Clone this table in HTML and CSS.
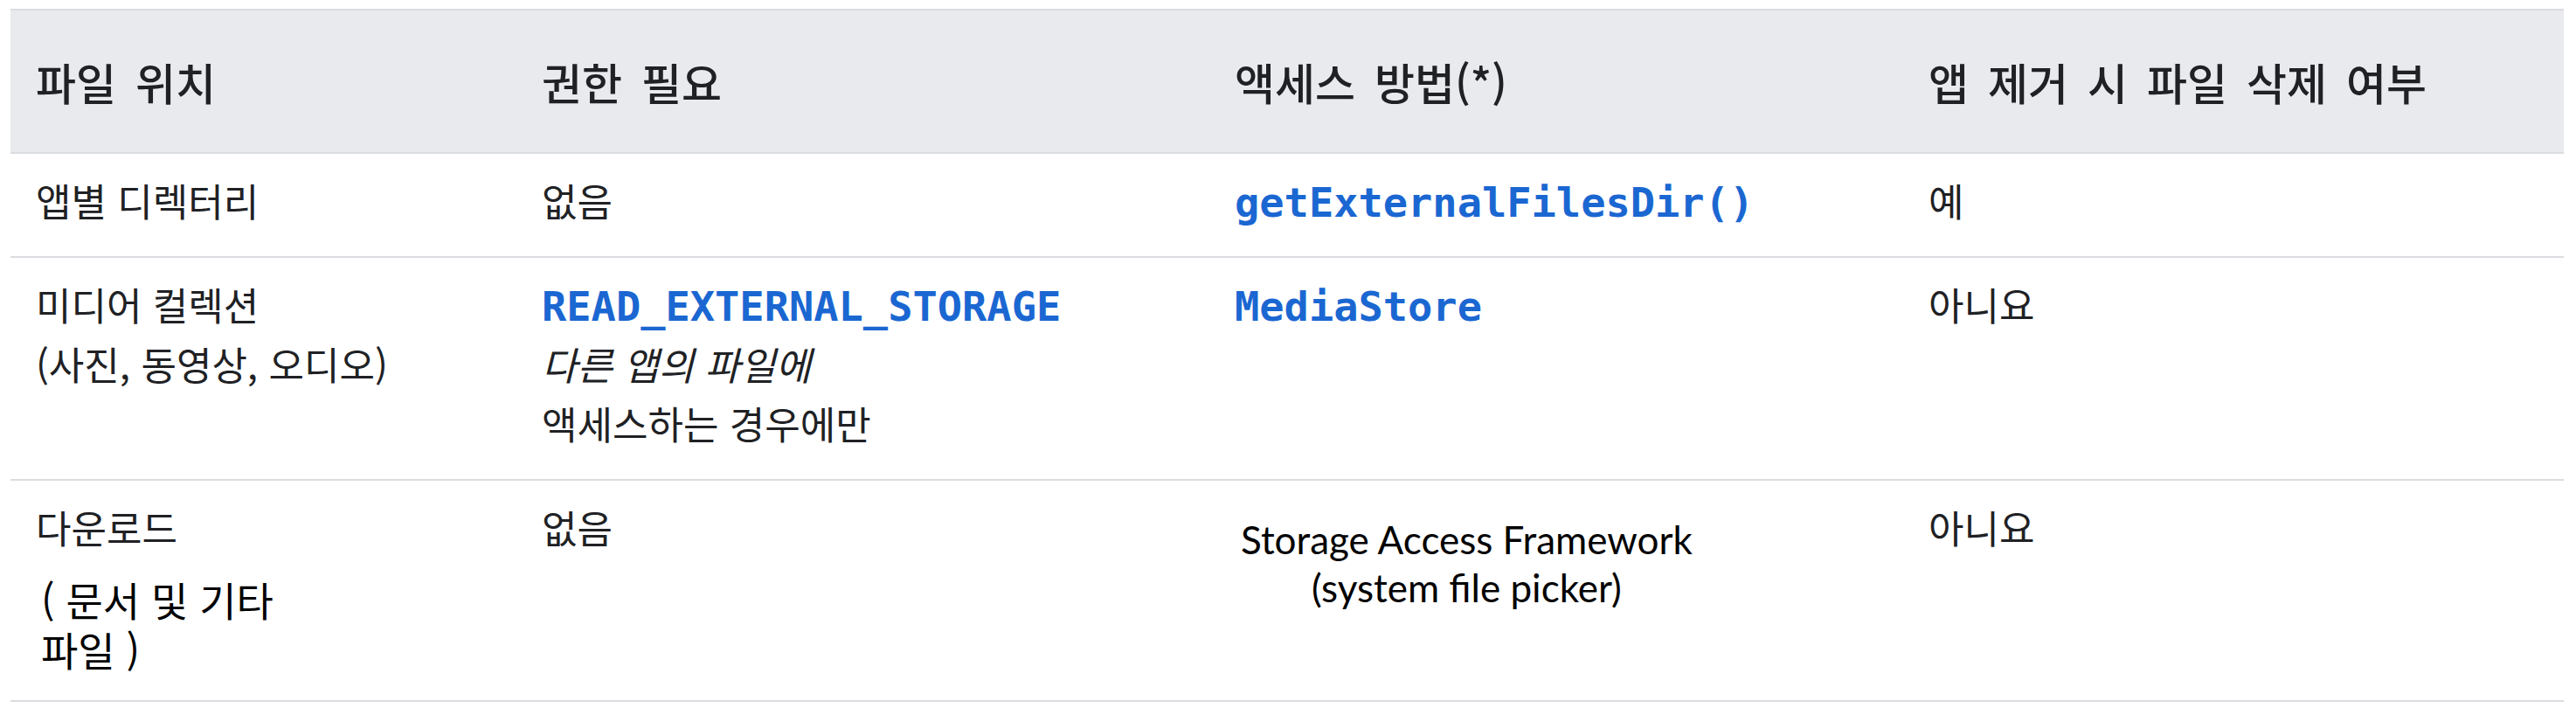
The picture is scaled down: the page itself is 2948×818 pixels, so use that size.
FILE: index.html
```html
<!DOCTYPE html>
<html lang="ko">
<head>
<meta charset="utf-8">
<title>저장소 위치</title>
<link rel="stylesheet" href="styles.css">
</head>
<body>
<table class="storage-table">
  <colgroup>
    <col class="col-loc">
    <col class="col-perm">
    <col class="col-access">
    <col class="col-remove">
  </colgroup>
  <thead>
    <tr>
      <th>파일 위치</th>
      <th>권한 필요</th>
      <th>액세스 방법(*)</th>
      <th>앱 제거 시 파일 삭제 여부</th>
    </tr>
  </thead>
  <tbody>
    <tr>
      <td>앱별 디렉터리</td>
      <td>없음</td>
      <td><code class="api">getExternalFilesDir()</code></td>
      <td>예</td>
    </tr>
    <tr>
      <td>미디어 컬렉션<br>(사진, 동영상, 오디오)</td>
      <td><code class="api">READ_EXTERNAL_STORAGE</code><br><em>다른 앱의 파일에</em><br>액세스하는 경우에만</td>
      <td><code class="api">MediaStore</code></td>
      <td>아니요</td>
    </tr>
    <tr>
      <td>다운로드<span class="note">( 문서 및 기타<br>파일 )</span></td>
      <td>없음</td>
      <td><span class="saf">Storage Access Framework<br>(system file picker)</span></td>
      <td>아니요</td>
    </tr>
  </tbody>
</table>
</body>
</html>
```
FILE: styles.css
```css
html, body {
  margin: 0;
  background: #ffffff;
}

body {
  padding: 10px 14px 0 12px;
  font-family: "Noto Sans CJK KR", "Noto Sans", sans-serif;
  color: #202124;
}

.storage-table {
  width: 2922px;
  table-layout: fixed;
  border-collapse: separate;
  border-spacing: 0;
}

.col-loc { width: 579px; }
.col-perm { width: 793px; }
.col-access { width: 794px; }
.col-remove { width: 756px; }

.storage-table th {
  background: #e8eaed;
  border-top: 2px solid #dadce0;
  border-bottom: 2px solid #dadce0;
  padding: 45px 29px;
  font-size: 50px;
  line-height: 72px;
  font-weight: 500;
  text-align: left;
  word-spacing: 8px;
  color: #202124;
}

.storage-table td {
  border-bottom: 2px solid #dadce0;
  padding: 19px 29px 30px;
  font-size: 44px;
  line-height: 68px;
  vertical-align: top;
}

.api {
  font-family: "DejaVu Sans Mono", "Liberation Mono", monospace;
  font-size: 47px;
  line-height: 1;
  font-weight: 700;
  color: #1b67d2;
}

em {
  font-style: italic;
}

.note {
  display: block;
  margin: 20px 0 0 6px;
  font-size: 46px;
  line-height: 57px;
  color: #000000;
}

.saf {
  display: inline-block;
  margin: 21px 0 0 7px;
  font-family: Lato, "Open Sans", sans-serif;
  font-size: 44px;
  line-height: 55px;
  text-align: center;
  color: #000000;
}
```
